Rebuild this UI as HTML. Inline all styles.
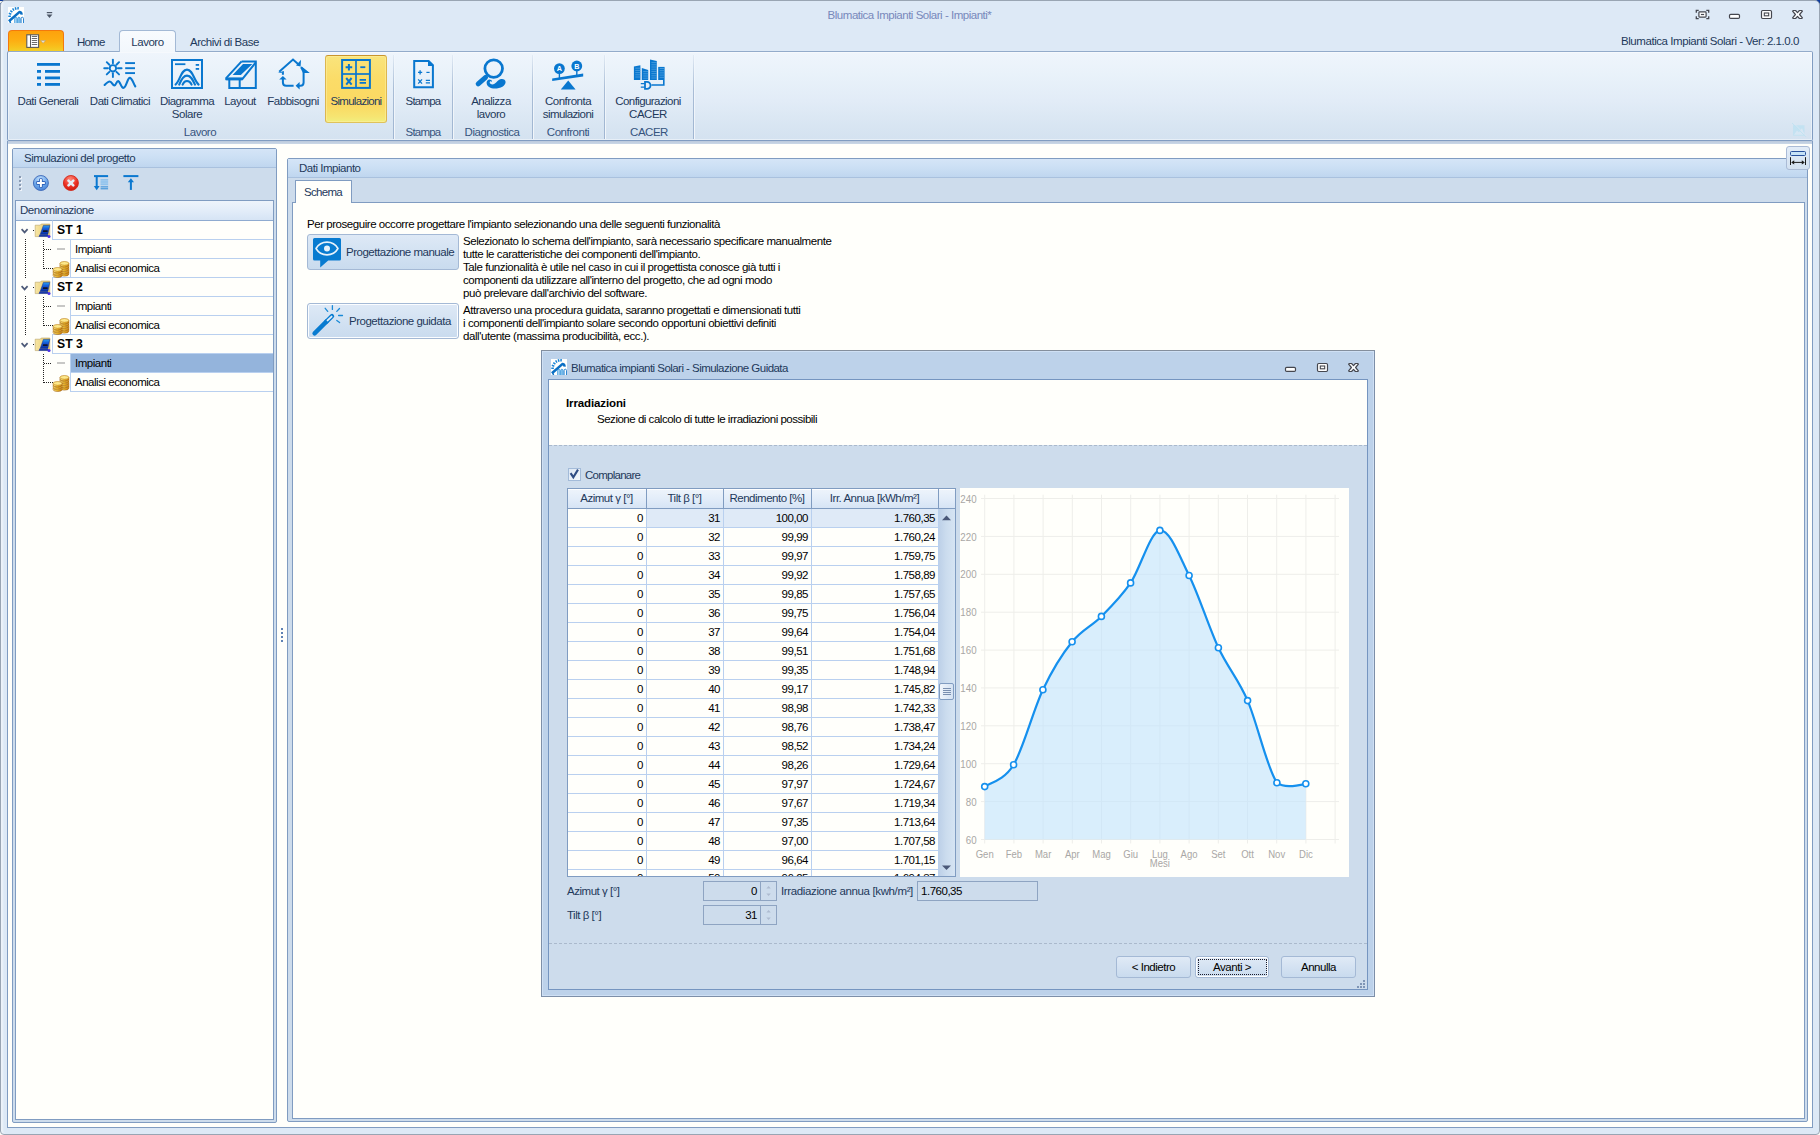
<!DOCTYPE html>
<html><head><meta charset="utf-8"><title>Blumatica Impianti Solari</title>
<style>
*{box-sizing:border-box;margin:0;padding:0}
html,body{width:1820px;height:1135px;overflow:hidden;background:#dde9f6}
body{font-family:"Liberation Sans",sans-serif;font-size:11.5px;letter-spacing:-0.48px;color:#1e395b;position:relative}
.a{position:absolute}
.t{position:absolute;white-space:nowrap;line-height:13px}
.c{text-align:center}
.r{text-align:right}
svg{position:absolute;overflow:visible}
</style></head>
<body>
<div class="a" style="left:0px;top:0px;width:6px;height:6px;background:#0d3b9b"></div>
<div class="a" style="left:1814px;top:0px;width:6px;height:6px;background:#0d3b9b"></div>
<div class="a" style="left:0px;top:1130px;width:5px;height:5px;background:#fdfdf8"></div>
<div class="a" style="left:1815px;top:1130px;width:5px;height:5px;background:#fdfdf8"></div>
<div class="a" style="left:0px;top:1px;width:3px;height:2px;background:#f3f3ee"></div>
<div class="a" style="left:0px;top:0px;width:1820px;height:1135px;background:#dde9f6;border:1px solid #99a5b3;border-radius:5px 5px 4px 4px;box-shadow:inset 3px 0 2px -1px rgba(255,255,255,0.5)"></div>
<div class="t c" style="left:0px;top:9px;width:1819px;color:#7888bb">Blumatica Impianti Solari - Impianti*</div>
<div class="t r" style="left:1500px;top:35px;width:299px;letter-spacing:-0.44px">Blumatica Impianti Solari - Ver: 2.1.0.0</div>
<svg style="left:0;top:0" width="1820" height="1135"><clipPath id="ci8"><rect x="8" y="7" width="16" height="16"/></clipPath><rect x="8" y="7" width="16" height="16" fill="#fffffd"/><g clip-path="url(#ci8)"><line x1="10.9" y1="16.3" x2="8.3" y2="16.2" stroke="#1a84d6" stroke-width="1.5"/><line x1="11.3" y1="14.2" x2="8.8" y2="13.3" stroke="#1a84d6" stroke-width="1.5"/><line x1="12.4" y1="12.2" x2="10.3" y2="10.6" stroke="#1a84d6" stroke-width="1.5"/><line x1="14.0" y1="10.6" x2="12.6" y2="8.4" stroke="#1a84d6" stroke-width="1.5"/><line x1="16.0" y1="9.7" x2="15.3" y2="7.2" stroke="#1a84d6" stroke-width="1.5"/><line x1="18.0" y1="9.5" x2="18.1" y2="6.9" stroke="#1a84d6" stroke-width="1.5"/><path d="M14.7,24 V18.7 a1.15,1.5 0 0 1 2.3,0 V24" fill="#b4daf4" stroke="#2f92dc" stroke-width="0.8"/><path d="M17.7,24 V18.7 a1.2,1.5 0 0 1 2.4,0 V24" fill="#8cc6ee" stroke="#2f92dc" stroke-width="0.8"/><path d="M21.1,24 V18.7 a1.2,1.5 0 0 1 2.4,0 V24" fill="none" stroke="#1577cc" stroke-width="0.9"/><path d="M8.9,21.3 L19.6,11.9 Q21.6,12.4 21.5,14.6" fill="none" stroke="#0a6fc4" stroke-width="2.5" stroke-linejoin="round"/><path d="M9.8,21.2 L10.6,23" stroke="#0a6fc4" stroke-width="1.4"/></g></svg>
<svg style="left:0;top:0" width="1820" height="1135"><rect x="46.8" y="12" width="5.4" height="1.2" fill="#4c5666"/><path d="M46.6,14.6 h5.8 l-2.9,3.3 z" fill="#4c5666"/></svg>
<svg style="left:0;top:0" width="1820" height="1135"><rect x="1698.9" y="11.9" width="7.2" height="5.2" rx="0.8" fill="#fff" stroke="#45474f" stroke-width="1.2"/><rect x="1700.9" y="13.9" width="3.2" height="1.2" fill="#45474f"/><path d="M1696.3,12.700000000000001 V10.3 H1698.7" fill="none" stroke="#45474f" stroke-width="1.3"/><path d="M1708.7,12.700000000000001 V10.3 H1706.3" fill="none" stroke="#45474f" stroke-width="1.3"/><path d="M1696.3,16.3 V18.7 H1698.7" fill="none" stroke="#45474f" stroke-width="1.3"/><path d="M1708.7,16.3 V18.7 H1706.3" fill="none" stroke="#45474f" stroke-width="1.3"/><rect x="1729.5" y="14.4" width="10" height="4" rx="1.2" fill="#fff" stroke="#45474f" stroke-width="1.2"/><rect x="1761.5" y="10.5" width="10" height="8" rx="1.2" fill="#fff" stroke="#45474f" stroke-width="1.2"/><rect x="1764.3" y="13.0" width="4.4" height="2.8" fill="#fff" stroke="#45474f" stroke-width="1.1"/><path d="M1792.6,11.1 L1793.3,10.5 L1795.6,10.5 L1797.5,12.6 L1799.4,10.5 L1801.7,10.5 L1802.4,11.1 L1799.6,14.5 L1802.4,17.9 L1801.7,18.5 L1799.4,18.5 L1797.5,16.4 L1795.6,18.5 L1793.3,18.5 L1792.6,17.9 L1795.4,14.5 z" fill="#fbfdff" stroke="#45474f" stroke-width="1.2" stroke-linejoin="round"/></svg>
<div class="a" style="left:8px;top:30px;width:56px;height:22px;border:1px solid #f3790d;border-bottom:none;border-radius:4px 4px 0 0;background:linear-gradient(#fda20c 0%,#fdae12 45%,#f8c01c 75%,#f0d22c 100%)"></div>
<svg style="left:0;top:0" width="1820" height="1135"><rect x="26.8" y="34.8" width="11.8" height="12.6" fill="#fff" stroke="#5a5a5a" stroke-width="1.1"/><line x1="30.5" y1="34.8" x2="30.5" y2="47.4" stroke="#5a5a5a" stroke-width="1"/><line x1="31.8" y1="36.5" x2="37.2" y2="36.5" stroke="#5a5a5a" stroke-width="0.9"/><line x1="31.8" y1="38.5" x2="37.2" y2="38.5" stroke="#5a5a5a" stroke-width="0.9"/><line x1="31.8" y1="40.5" x2="37.2" y2="40.5" stroke="#5a5a5a" stroke-width="0.9"/><line x1="31.8" y1="42.5" x2="37.2" y2="42.5" stroke="#5a5a5a" stroke-width="0.9"/><line x1="31.8" y1="44.5" x2="37.2" y2="44.5" stroke="#5a5a5a" stroke-width="0.9"/><path d="M40.6,40.6 h5 l-2.5,2.6 z" fill="#e9e3d2" stroke="#a89a78" stroke-width="0.5"/></svg>
<div class="t " style="left:77px;top:36px;letter-spacing:-0.8px">Home</div>
<div class="t " style="left:190px;top:36px;">Archivi di Base</div>
<div class="a" style="left:7px;top:51px;width:1806px;height:90px;border:1px solid #809cc1;border-radius:2px;background:linear-gradient(#eff5fc 0%,#e9f2fa 25%,#e2ecf7 55%,#d8e5f2 85%,#d4e2f0 100%);border-top-color:#93abca;box-shadow:inset 0 0 0 1px rgba(255,255,255,0.45)"></div>
<div class="a" style="left:119px;top:30px;width:57px;height:22px;border:1px solid #a3b9d5;border-bottom:none;border-radius:4px 4px 0 0;background:linear-gradient(#f8fbfe,#f2f7fc)"></div>
<div class="t c" style="left:119px;top:36px;width:57px;">Lavoro</div>
<div class="a" style="left:8px;top:141px;width:1804px;height:3px;background:linear-gradient(#bac9dc,#cbd8e7)"></div>
<div class="a" style="left:393px;top:55px;width:1px;height:84px;background:linear-gradient(rgba(160,180,205,0.15),#a9bdd6 40%,#9fb5d1)"></div>
<div class="a" style="left:394px;top:55px;width:1px;height:84px;background:linear-gradient(rgba(255,255,255,0.2),rgba(255,255,255,0.7))"></div>
<div class="a" style="left:452px;top:55px;width:1px;height:84px;background:linear-gradient(rgba(160,180,205,0.15),#a9bdd6 40%,#9fb5d1)"></div>
<div class="a" style="left:453px;top:55px;width:1px;height:84px;background:linear-gradient(rgba(255,255,255,0.2),rgba(255,255,255,0.7))"></div>
<div class="a" style="left:532px;top:55px;width:1px;height:84px;background:linear-gradient(rgba(160,180,205,0.15),#a9bdd6 40%,#9fb5d1)"></div>
<div class="a" style="left:533px;top:55px;width:1px;height:84px;background:linear-gradient(rgba(255,255,255,0.2),rgba(255,255,255,0.7))"></div>
<div class="a" style="left:604px;top:55px;width:1px;height:84px;background:linear-gradient(rgba(160,180,205,0.15),#a9bdd6 40%,#9fb5d1)"></div>
<div class="a" style="left:605px;top:55px;width:1px;height:84px;background:linear-gradient(rgba(255,255,255,0.2),rgba(255,255,255,0.7))"></div>
<div class="a" style="left:693px;top:55px;width:1px;height:84px;background:linear-gradient(rgba(160,180,205,0.15),#a9bdd6 40%,#9fb5d1)"></div>
<div class="a" style="left:694px;top:55px;width:1px;height:84px;background:linear-gradient(rgba(255,255,255,0.2),rgba(255,255,255,0.7))"></div>
<div class="t c" style="left:150px;top:126px;width:100px;color:#36547e">Lavoro</div>
<div class="t c" style="left:373px;top:126px;width:100px;color:#36547e;letter-spacing:-0.8px">Stampa</div>
<div class="t c" style="left:442px;top:126px;width:100px;color:#36547e">Diagnostica</div>
<div class="t c" style="left:518px;top:126px;width:100px;color:#36547e">Confronti</div>
<div class="t c" style="left:599px;top:126px;width:100px;color:#36547e">CACER</div>
<div class="a" style="left:325px;top:55px;width:62px;height:68px;border:1px solid #dcb650;border-top-color:#c8942e;border-bottom-color:#dfc25c;border-radius:3px;background:linear-gradient(#f9e47c 0%,#fbdc68 35%,#fbd962 75%,#f6e572 92%,#f1ee7e 100%);box-shadow:inset 0 0 0 1px rgba(255,240,160,0.55)"></div>
<div class="t c" style="left:-2px;top:95px;width:100px;">Dati Generali</div>
<div class="t c" style="left:70px;top:95px;width:100px;">Dati Climatici</div>
<div class="t c" style="left:137px;top:95px;width:100px;letter-spacing:-0.6px">Diagramma</div>
<div class="t c" style="left:137px;top:108px;width:100px;">Solare</div>
<div class="t c" style="left:190px;top:95px;width:100px;">Layout</div>
<div class="t c" style="left:243px;top:95px;width:100px;">Fabbisogni</div>
<div class="t c" style="left:306px;top:95px;width:100px;letter-spacing:-0.72px">Simulazioni</div>
<div class="t c" style="left:373px;top:95px;width:100px;letter-spacing:-0.8px">Stampa</div>
<div class="t c" style="left:441px;top:95px;width:100px;">Analizza</div>
<div class="t c" style="left:441px;top:108px;width:100px;">lavoro</div>
<div class="t c" style="left:518px;top:95px;width:100px;">Confronta</div>
<div class="t c" style="left:518px;top:108px;width:100px;letter-spacing:-0.6px">simulazioni</div>
<div class="t c" style="left:598px;top:95px;width:100px;letter-spacing:-0.58px">Configurazioni</div>
<div class="t c" style="left:598px;top:108px;width:100px;">CACER</div>
<svg style="left:0;top:0" width="1820" height="1135"><rect x="37" y="63" width="23" height="2.8" fill="#0977cf"/><rect x="37" y="70" width="4" height="2.8" fill="#0977cf"/><rect x="45" y="70" width="15" height="2.8" fill="#0977cf"/><rect x="37" y="76.5" width="4" height="2.8" fill="#0977cf"/><rect x="45" y="76.5" width="15" height="2.8" fill="#0977cf"/><rect x="37" y="83" width="4" height="2.8" fill="#0977cf"/><rect x="45" y="83" width="15" height="2.8" fill="#0977cf"/><circle cx="112.9" cy="68.3" r="3.2" fill="none" stroke="#0977cf" stroke-width="1.9"/><line x1="117.90" y1="68.30" x2="121.60" y2="68.30" stroke="#0977cf" stroke-width="1.9" stroke-linecap="round"/><line x1="116.44" y1="71.84" x2="119.05" y2="74.45" stroke="#0977cf" stroke-width="1.9" stroke-linecap="round"/><line x1="112.90" y1="73.30" x2="112.90" y2="77.00" stroke="#0977cf" stroke-width="1.9" stroke-linecap="round"/><line x1="109.36" y1="71.84" x2="106.75" y2="74.45" stroke="#0977cf" stroke-width="1.9" stroke-linecap="round"/><line x1="107.90" y1="68.30" x2="104.20" y2="68.30" stroke="#0977cf" stroke-width="1.9" stroke-linecap="round"/><line x1="109.36" y1="64.76" x2="106.75" y2="62.15" stroke="#0977cf" stroke-width="1.9" stroke-linecap="round"/><line x1="112.90" y1="63.30" x2="112.90" y2="59.60" stroke="#0977cf" stroke-width="1.9" stroke-linecap="round"/><line x1="116.44" y1="64.76" x2="119.05" y2="62.15" stroke="#0977cf" stroke-width="1.9" stroke-linecap="round"/><line x1="125.2" y1="63.1" x2="135" y2="63.1" stroke="#0977cf" stroke-width="1.9"/><line x1="125.2" y1="68.2" x2="135" y2="68.2" stroke="#0977cf" stroke-width="1.9"/><line x1="125.2" y1="73.1" x2="135" y2="73.1" stroke="#0977cf" stroke-width="1.9"/><path d="M104.6,85 C106.5,83 108,81.5 109.8,81.5 C112,81.5 112.5,85.4 114.4,85.4 C116.3,85.4 116.3,81.1 118.1,81.1 C120.2,81.1 121,87.9 123.4,87.9 C126.2,87.9 127.4,77.9 129.8,77.9 C132,77.9 133.5,83.5 135.3,86.4" fill="none" stroke="#0977cf" stroke-width="2.1" stroke-linecap="round"/><rect x="172" y="60" width="30" height="28" fill="none" stroke="#0977cf" stroke-width="2"/><line x1="175" y1="64.2" x2="185.4" y2="64.2" stroke="#0977cf" stroke-width="1.8"/><rect x="195.7" y="64" width="3.4" height="1.8" fill="#0977cf"/><rect x="195.7" y="68" width="3.4" height="1.8" fill="#0977cf"/><path d="M175.6,84.6 C180.5,80 181,69.6 187,69.6 C193,69.6 193.5,80 198.6,84.6" fill="none" stroke="#0977cf" stroke-width="2.1" stroke-linecap="round"/><path d="M179.2,84.6 C181,80 183,75.6 187,75.6 C191,75.6 193,80 195,84.6" fill="none" stroke="#0977cf" stroke-width="2.1" stroke-linecap="round"/><path d="M182.6,84.6 C183.5,82.4 185,81 187,81 C189,81 190.6,82.4 191.6,84.6" fill="none" stroke="#0977cf" stroke-width="2.1" stroke-linecap="round"/><path d="M241.6,61.4 H255.8 V87.9 H229.3 V79.3" fill="none" stroke="#0977cf" stroke-width="2" stroke-linejoin="miter"/><path d="M241.6,61.4 L226.6,77.6 V79.2 H242.3 L255.8,62.4" fill="none" stroke="#0977cf" stroke-width="2" stroke-linejoin="round"/><path d="M225.4,77.4 H242.6 V80.2 H225.4 z" fill="#0977cf"/><path d="M243,64 H252.4 L240.8,75 H232.6 z" fill="#0977cf"/><line x1="239.7" y1="79.5" x2="239.7" y2="88" stroke="#0977cf" stroke-width="2"/><path d="M282.9,74.7 V72.2 M279.2,71.8 L293,59.6 L298.6,64.6" fill="none" stroke="#0977cf" stroke-width="2" stroke-linejoin="miter" stroke-linecap="butt"/><path d="M277.6,72.8 H283.9 V71 z" fill="#0977cf"/><path d="M296,65.6 L301,59.8 L300.6,66.4 z" fill="#0977cf"/><path d="M301.4,67.4 L307,72 H303.6 V82.6 Q303.6,85.8 300.4,85.8 H299" fill="none" stroke="#0977cf" stroke-width="2"/><path d="M308.8,72.9 L301,66.2 L300.4,68 L303,72.9 z" fill="#0977cf"/><path d="M299.6,82 L295.6,85.8 L299.6,89.6 z" fill="#0977cf"/><path d="M293.6,85.8 H286.2 Q282.9,85.8 282.9,82.6 V79" fill="none" stroke="#0977cf" stroke-width="2"/><path d="M279.2,79.6 L282.9,76 L286.6,79.6 z" fill="#0977cf"/><rect x="342.1" y="60" width="27.8" height="27.9" fill="none" stroke="#0977cf" stroke-width="2"/><line x1="356" y1="60" x2="356" y2="88" stroke="#0977cf" stroke-width="1.7"/><line x1="342" y1="74" x2="370" y2="74" stroke="#0977cf" stroke-width="1.7"/><path d="M345.6,67.2 h6.6 M348.9,63.9 v6.6" stroke="#0977cf" stroke-width="2"/><path d="M360.3,67.2 h5" stroke="#0977cf" stroke-width="1.8"/><path d="M346.2,78 l5.4,6.6 M351.6,78 l-5.4,6.6" stroke="#0977cf" stroke-width="2"/><path d="M359.6,79.8 h6.4 M359.6,82.8 h6.4" stroke="#0977cf" stroke-width="1.7"/><path d="M414.2,61 H428.6 L432.9,65.2 V87.3 H414.2 z" fill="none" stroke="#0977cf" stroke-width="2" stroke-linejoin="miter"/><path d="M428,60.4 V66 H433.6 z" fill="#0977cf"/><path d="M418,72.4 h4.2 M420.1,70.3 v4.2" stroke="#0977cf" stroke-width="1.3"/><path d="M426.4,72.4 h3.2" stroke="#0977cf" stroke-width="1.2"/><path d="M418.2,79.4 l3.8,4.2 M422,79.4 l-3.8,4.2" stroke="#0977cf" stroke-width="1.3"/><path d="M425.8,80.4 h4.2 M425.8,82.8 h4.2" stroke="#0977cf" stroke-width="1.2"/><circle cx="493.7" cy="68.6" r="8.8" fill="none" stroke="#0977cf" stroke-width="2.8"/><path d="M485.6,77.4 L478.2,83.8" stroke="#0977cf" stroke-width="5" stroke-linecap="round"/><path d="M491.2,80.2 C489,78.6 486.6,80.4 486.6,82.8 C486.6,86.4 490.6,88.6 494.8,88.6 C500.8,88.6 505.6,85.6 505.6,82 C505.6,79.4 502.8,78.4 500.2,79.2 C497.2,80.2 495.8,84.4 492.2,84.4 C490,84.4 489.2,82.6 490,81.6 C490.5,81 491.3,81.2 491.4,81.8 C492.4,81.4 492.2,80.6 491.2,80.2 z" fill="#0977cf"/><circle cx="559.4" cy="68.6" r="5.4" fill="#0977cf"/><circle cx="576.8" cy="66" r="5.4" fill="#0977cf"/><line x1="559.4" y1="73" x2="559.4" y2="78" stroke="#0977cf" stroke-width="1.4"/><line x1="576.8" y1="70" x2="576.8" y2="75.4" stroke="#0977cf" stroke-width="1.4"/><path d="M552.2,78.4 L583.2,73.4 V76.4 L552.2,81.1 z" fill="#0977cf"/><path d="M568.2,80.4 L575.6,89.6 H560.8 z" fill="#0977cf"/><text x="559.4" y="71.4" text-anchor="middle" font-family="Liberation Sans" font-weight="bold" font-size="7.2" fill="#fff" letter-spacing="0">A</text><text x="576.8" y="68.8" text-anchor="middle" font-family="Liberation Sans" font-weight="bold" font-size="7.2" fill="#fff" letter-spacing="0">B</text><path d="M633.9,66.6 L640.4,65.2 V80 H633.9 z" fill="#0977cf"/><line x1="635.3" y1="68.2" x2="640.4" y2="68.2" stroke="#5aa7e2" stroke-width="0.7"/><line x1="635.3" y1="70.4" x2="640.4" y2="70.4" stroke="#5aa7e2" stroke-width="0.7"/><line x1="635.3" y1="72.6" x2="640.4" y2="72.6" stroke="#5aa7e2" stroke-width="0.7"/><line x1="635.3" y1="74.8" x2="640.4" y2="74.8" stroke="#5aa7e2" stroke-width="0.7"/><line x1="635.3" y1="77.0" x2="640.4" y2="77.0" stroke="#5aa7e2" stroke-width="0.7"/><path d="M641.8,68 L648.2,70 V80 H641.8 z" fill="#0977cf"/><line x1="643.1999999999999" y1="71.6" x2="648.2" y2="71.6" stroke="#5aa7e2" stroke-width="0.7"/><line x1="643.1999999999999" y1="73.8" x2="648.2" y2="73.8" stroke="#5aa7e2" stroke-width="0.7"/><line x1="643.1999999999999" y1="76.0" x2="648.2" y2="76.0" stroke="#5aa7e2" stroke-width="0.7"/><line x1="643.1999999999999" y1="78.2" x2="648.2" y2="78.2" stroke="#5aa7e2" stroke-width="0.7"/><path d="M650,59.4 L656.8,61 V80 H650 z" fill="#0977cf"/><line x1="651.4" y1="62.6" x2="656.8" y2="62.6" stroke="#5aa7e2" stroke-width="0.7"/><line x1="651.4" y1="64.8" x2="656.8" y2="64.8" stroke="#5aa7e2" stroke-width="0.7"/><line x1="651.4" y1="67.0" x2="656.8" y2="67.0" stroke="#5aa7e2" stroke-width="0.7"/><line x1="651.4" y1="69.2" x2="656.8" y2="69.2" stroke="#5aa7e2" stroke-width="0.7"/><line x1="651.4" y1="71.4" x2="656.8" y2="71.4" stroke="#5aa7e2" stroke-width="0.7"/><line x1="651.4" y1="73.6" x2="656.8" y2="73.6" stroke="#5aa7e2" stroke-width="0.7"/><line x1="651.4" y1="75.8" x2="656.8" y2="75.8" stroke="#5aa7e2" stroke-width="0.7"/><line x1="651.4" y1="78.0" x2="656.8" y2="78.0" stroke="#5aa7e2" stroke-width="0.7"/><path d="M658.2,66.9 L664.6,66.9 V80 H658.2 z" fill="#0977cf"/><line x1="659.6" y1="68.5" x2="664.6" y2="68.5" stroke="#5aa7e2" stroke-width="0.7"/><line x1="659.6" y1="70.7" x2="664.6" y2="70.7" stroke="#5aa7e2" stroke-width="0.7"/><line x1="659.6" y1="72.9" x2="664.6" y2="72.9" stroke="#5aa7e2" stroke-width="0.7"/><line x1="659.6" y1="75.1" x2="664.6" y2="75.1" stroke="#5aa7e2" stroke-width="0.7"/><line x1="659.6" y1="77.3" x2="664.6" y2="77.3" stroke="#5aa7e2" stroke-width="0.7"/><path d="M663.8,80 V85 H651.4" fill="none" stroke="#0977cf" stroke-width="1.6"/><path d="M645,81.9 h2 a3.5,3.5 0 0 1 0,7 h-2 z" fill="none" stroke="#0977cf" stroke-width="1.8"/><path d="M640.8,83.6 h4 M640.8,87.1 h4" stroke="#0977cf" stroke-width="1.3"/></svg>
<svg style="left:0;top:0" width="1820" height="1135"><rect x="1793" y="125.2" width="11.5" height="10.5" fill="#bfe2f2" opacity="0.85"/><path d="M1794,134.8 l3,-4.4 l2,2.2 l3,-4.6 l2.4,6.8 z" fill="#d9e8f4" opacity="0.9"/><path d="M1792.1,123 L1805.9,136.8" stroke="#bfe2f2" stroke-width="1" opacity="0.9"/><path d="M1792.9,122.4 L1806.7,136.2" stroke="#dbe7f3" stroke-width="0.8"/></svg>
<div class="a" style="left:7px;top:141px;width:1806px;height:987px;border:1px solid #809cc1;border-top:none;background:transparent"></div>
<div class="a" style="left:8px;top:144px;width:1804px;height:983px;background:#fffffb"></div>
<div class="a" style="left:12px;top:148px;width:265px;height:975px;border:1px solid #809cc1;border-radius:2px;background:#cddcec"></div>
<div class="a" style="left:13px;top:149px;width:263px;height:19px;background:linear-gradient(#d5e5f7 0%,#cbdff4 50%,#bfd6ef 100%);border-bottom:1px solid #a9c1de"></div>
<div class="t " style="left:24px;top:152px;">Simulazioni del progetto</div>
<div class="a" style="left:19px;top:176px;width:2px;height:2px;background:#8a9bb3;box-shadow:1px 1px 0 #eef3fa"></div>
<div class="a" style="left:19px;top:180px;width:2px;height:2px;background:#8a9bb3;box-shadow:1px 1px 0 #eef3fa"></div>
<div class="a" style="left:19px;top:184px;width:2px;height:2px;background:#8a9bb3;box-shadow:1px 1px 0 #eef3fa"></div>
<div class="a" style="left:19px;top:188px;width:2px;height:2px;background:#8a9bb3;box-shadow:1px 1px 0 #eef3fa"></div>
<svg style="left:0;top:0" width="1820" height="1135"><defs><radialGradient id="gA" cx="0.45" cy="0.25" r="0.85"><stop offset="0" stop-color="#c4e0fb"/><stop offset="0.55" stop-color="#6aa6ea"/><stop offset="1" stop-color="#3a72cc"/></radialGradient><radialGradient id="gD" cx="0.45" cy="0.25" r="0.85"><stop offset="0" stop-color="#ff8a7a"/><stop offset="0.55" stop-color="#ec2f22"/><stop offset="1" stop-color="#c01408"/></radialGradient></defs><circle cx="40.9" cy="183" r="7.5" fill="url(#gA)" stroke="#3d69b8" stroke-width="0.9"/><path d="M37.7,183 h6.4 M40.9,179.8 v6.4" stroke="#2f62ba" stroke-width="3.8" stroke-linecap="round"/><path d="M37.7,183 h6.4 M40.9,179.8 v6.4" stroke="#fff" stroke-width="2" stroke-linecap="round"/><circle cx="70.9" cy="183" r="7.5" fill="url(#gD)" stroke="#d2281a" stroke-width="0.9"/><path d="M68.5,180.6 l4.8,4.8 M73.3,180.6 l-4.8,4.8" stroke="#e6edf4" stroke-width="2.6" stroke-linecap="round"/><rect x="94" y="175.1" width="14.1" height="2" fill="#0b78d0"/><rect x="95.7" y="177" width="2" height="10" fill="#0b78d0"/><path d="M93.8,186 h5.8 l-2.9,4.2 z" fill="#0b78d0"/><rect x="100.6" y="179" width="7.5" height="6.4" fill="#a9cff0"/><line x1="100.6" y1="179.6" x2="108.1" y2="179.6" stroke="#7fb8ea" stroke-width="0.6"/><line x1="100.6" y1="181.2" x2="108.1" y2="181.2" stroke="#7fb8ea" stroke-width="0.6"/><line x1="100.6" y1="182.8" x2="108.1" y2="182.8" stroke="#7fb8ea" stroke-width="0.6"/><line x1="100.6" y1="184.4" x2="108.1" y2="184.4" stroke="#7fb8ea" stroke-width="0.6"/><line x1="100.6" y1="186.9" x2="108.1" y2="186.9" stroke="#2a88d8" stroke-width="1"/><line x1="100.6" y1="188.8" x2="108.1" y2="188.8" stroke="#2a88d8" stroke-width="1"/><rect x="123.4" y="175.1" width="15" height="2" fill="#0b78d0"/><rect x="129.9" y="181.6" width="2" height="8.3" fill="#0b78d0"/><path d="M127.8,182.2 h6.2 l-3.1,-4 z" fill="#0b78d0"/></svg>
<div class="a" style="left:15px;top:200px;width:259px;height:920px;border:1px solid #809cc1;background:#fffffb"></div>
<div class="a" style="left:16px;top:201px;width:257px;height:19px;background:linear-gradient(#eef4fb 0%,#e3edf9 50%,#d6e4f5 100%)"></div>
<div class="a" style="left:16px;top:220px;width:257px;height:1px;background:#8fabd0"></div>
<div class="t " style="left:20px;top:204px;">Denominazione</div>
<div class="a" style="left:52px;top:220px;width:221px;height:20px;border:1px solid #b9d0ef;border-right:none;border-top-color:#8fabd0;background:#fffffb"></div>
<div class="t " style="left:57px;top:223.6px;font-weight:bold;font-size:12.2px;letter-spacing:0.05px;color:#000">ST 1</div>
<div class="a" style="left:70px;top:239px;width:203px;height:20px;border:1px solid #b9d0ef;border-right:none;background:#fffffb"></div>
<div class="t " style="left:75px;top:243px;color:#000">Impianti</div>
<div class="a" style="left:70px;top:258px;width:203px;height:20px;border:1px solid #b9d0ef;border-right:none;background:#fffffb"></div>
<div class="t " style="left:75px;top:262px;color:#000">Analisi economica</div>
<div class="a" style="left:52px;top:277px;width:221px;height:20px;border:1px solid #b9d0ef;border-right:none;border-top-color:#b9d0ef;background:#fffffb"></div>
<div class="t " style="left:57px;top:280.6px;font-weight:bold;font-size:12.2px;letter-spacing:0.05px;color:#000">ST 2</div>
<div class="a" style="left:70px;top:296px;width:203px;height:20px;border:1px solid #b9d0ef;border-right:none;background:#fffffb"></div>
<div class="t " style="left:75px;top:300px;color:#000">Impianti</div>
<div class="a" style="left:70px;top:315px;width:203px;height:20px;border:1px solid #b9d0ef;border-right:none;background:#fffffb"></div>
<div class="t " style="left:75px;top:319px;color:#000">Analisi economica</div>
<div class="a" style="left:52px;top:334px;width:221px;height:20px;border:1px solid #b9d0ef;border-right:none;border-top-color:#b9d0ef;background:#fffffb"></div>
<div class="t " style="left:57px;top:337.6px;font-weight:bold;font-size:12.2px;letter-spacing:0.05px;color:#000">ST 3</div>
<div class="a" style="left:70px;top:353px;width:203px;height:20px;border:1px solid #b9d0ef;border-right:none;background:#94b4dc"></div>
<div class="t " style="left:75px;top:357px;color:#000">Impianti</div>
<div class="a" style="left:70px;top:372px;width:203px;height:20px;border:1px solid #b9d0ef;border-right:none;background:#fffffb"></div>
<div class="t " style="left:75px;top:376px;color:#000">Analisi economica</div>
<svg style="left:0;top:0" width="1820" height="1135"><defs><linearGradient id="gF" x1="0" y1="0" x2="1" y2="0"><stop offset="0" stop-color="#f7e6a4"/><stop offset="1" stop-color="#e6c667"/></linearGradient><linearGradient id="gP" x1="0" y1="0" x2="0" y2="1"><stop offset="0" stop-color="#2aa0f0"/><stop offset="0.4" stop-color="#1458d8"/><stop offset="1" stop-color="#0a2fa0"/></linearGradient><linearGradient id="gC" x1="0" y1="0" x2="1" y2="0"><stop offset="0" stop-color="#fff0a0"/><stop offset="0.5" stop-color="#f3c22e"/><stop offset="1" stop-color="#c9780e"/></linearGradient></defs><path d="M21.6,229.2 l3,3.2 l3,-3.2" fill="none" stroke="#4d5a78" stroke-width="1.7"/><rect x="33" y="230" width="1" height="1" fill="#222"/><path d="M35.2,225.20000000000002 h5 l1,-1.2 h8.6 v12.6 h-14.6 z" fill="url(#gF)" stroke="#b9a268" stroke-width="0.6"/><path d="M43.400000000000006,225.4 h6.4 l-2,9 h-7.6 z" fill="url(#gP)" stroke="#0a2a8a" stroke-width="0.5"/><path d="M43.2,230.20000000000002 h4.4 v1.8 h-4.8 z" fill="#10142e"/><path d="M39.6,234.60000000000002 h8 l1.6,2.2 h-10.6 z" fill="#1a3aa8"/><circle cx="49.0" cy="236.4" r="1.5" fill="#4a2fe8"/><rect x="57" y="248" width="8" height="2" fill="#c8c8c6"/><path d="M60.00000000000001,272.59999999999997 v1.6 a4.4,1.9 0 0 0 8.8,0 v-1.6 z" fill="url(#gC)" stroke="#9c5a06" stroke-width="0.6"/><ellipse cx="64.4" cy="272.59999999999997" rx="4.4" ry="1.9" fill="#fde88a" stroke="#b9780e" stroke-width="0.6"/><path d="M60.00000000000001,270.29999999999995 v1.6 a4.4,1.9 0 0 0 8.8,0 v-1.6 z" fill="url(#gC)" stroke="#9c5a06" stroke-width="0.6"/><ellipse cx="64.4" cy="270.29999999999995" rx="4.4" ry="1.9" fill="#fde88a" stroke="#b9780e" stroke-width="0.6"/><path d="M60.00000000000001,267.99999999999994 v1.6 a4.4,1.9 0 0 0 8.8,0 v-1.6 z" fill="url(#gC)" stroke="#9c5a06" stroke-width="0.6"/><ellipse cx="64.4" cy="267.99999999999994" rx="4.4" ry="1.9" fill="#fde88a" stroke="#b9780e" stroke-width="0.6"/><path d="M60.00000000000001,265.7 v1.6 a4.4,1.9 0 0 0 8.8,0 v-1.6 z" fill="url(#gC)" stroke="#9c5a06" stroke-width="0.6"/><ellipse cx="64.4" cy="265.7" rx="4.4" ry="1.9" fill="#fde88a" stroke="#b9780e" stroke-width="0.6"/><path d="M60.00000000000001,263.4 v1.6 a4.4,1.9 0 0 0 8.8,0 v-1.6 z" fill="url(#gC)" stroke="#9c5a06" stroke-width="0.6"/><ellipse cx="64.4" cy="263.4" rx="4.4" ry="1.9" fill="#fde88a" stroke="#b9780e" stroke-width="0.6"/><path d="M53.2,274.0 v1.6 a4.4,1.9 0 0 0 8.8,0 v-1.6 z" fill="url(#gC)" stroke="#9c5a06" stroke-width="0.6"/><ellipse cx="57.6" cy="274.0" rx="4.4" ry="1.9" fill="#fde88a" stroke="#b9780e" stroke-width="0.6"/><path d="M53.2,271.7 v1.6 a4.4,1.9 0 0 0 8.8,0 v-1.6 z" fill="url(#gC)" stroke="#9c5a06" stroke-width="0.6"/><ellipse cx="57.6" cy="271.7" rx="4.4" ry="1.9" fill="#fde88a" stroke="#b9780e" stroke-width="0.6"/><path d="M53.2,269.4 v1.6 a4.4,1.9 0 0 0 8.8,0 v-1.6 z" fill="url(#gC)" stroke="#9c5a06" stroke-width="0.6"/><ellipse cx="57.6" cy="269.4" rx="4.4" ry="1.9" fill="#fde88a" stroke="#b9780e" stroke-width="0.6"/><path d="M21.6,286.2 l3,3.2 l3,-3.2" fill="none" stroke="#4d5a78" stroke-width="1.7"/><rect x="33" y="287" width="1" height="1" fill="#222"/><path d="M35.2,282.2 h5 l1,-1.2 h8.6 v12.6 h-14.6 z" fill="url(#gF)" stroke="#b9a268" stroke-width="0.6"/><path d="M43.400000000000006,282.40000000000003 h6.4 l-2,9 h-7.6 z" fill="url(#gP)" stroke="#0a2a8a" stroke-width="0.5"/><path d="M43.2,287.2 h4.4 v1.8 h-4.8 z" fill="#10142e"/><path d="M39.6,291.6 h8 l1.6,2.2 h-10.6 z" fill="#1a3aa8"/><circle cx="49.0" cy="293.40000000000003" r="1.5" fill="#4a2fe8"/><rect x="57" y="305" width="8" height="2" fill="#c8c8c6"/><path d="M60.00000000000001,329.59999999999997 v1.6 a4.4,1.9 0 0 0 8.8,0 v-1.6 z" fill="url(#gC)" stroke="#9c5a06" stroke-width="0.6"/><ellipse cx="64.4" cy="329.59999999999997" rx="4.4" ry="1.9" fill="#fde88a" stroke="#b9780e" stroke-width="0.6"/><path d="M60.00000000000001,327.29999999999995 v1.6 a4.4,1.9 0 0 0 8.8,0 v-1.6 z" fill="url(#gC)" stroke="#9c5a06" stroke-width="0.6"/><ellipse cx="64.4" cy="327.29999999999995" rx="4.4" ry="1.9" fill="#fde88a" stroke="#b9780e" stroke-width="0.6"/><path d="M60.00000000000001,324.99999999999994 v1.6 a4.4,1.9 0 0 0 8.8,0 v-1.6 z" fill="url(#gC)" stroke="#9c5a06" stroke-width="0.6"/><ellipse cx="64.4" cy="324.99999999999994" rx="4.4" ry="1.9" fill="#fde88a" stroke="#b9780e" stroke-width="0.6"/><path d="M60.00000000000001,322.7 v1.6 a4.4,1.9 0 0 0 8.8,0 v-1.6 z" fill="url(#gC)" stroke="#9c5a06" stroke-width="0.6"/><ellipse cx="64.4" cy="322.7" rx="4.4" ry="1.9" fill="#fde88a" stroke="#b9780e" stroke-width="0.6"/><path d="M60.00000000000001,320.4 v1.6 a4.4,1.9 0 0 0 8.8,0 v-1.6 z" fill="url(#gC)" stroke="#9c5a06" stroke-width="0.6"/><ellipse cx="64.4" cy="320.4" rx="4.4" ry="1.9" fill="#fde88a" stroke="#b9780e" stroke-width="0.6"/><path d="M53.2,331.0 v1.6 a4.4,1.9 0 0 0 8.8,0 v-1.6 z" fill="url(#gC)" stroke="#9c5a06" stroke-width="0.6"/><ellipse cx="57.6" cy="331.0" rx="4.4" ry="1.9" fill="#fde88a" stroke="#b9780e" stroke-width="0.6"/><path d="M53.2,328.7 v1.6 a4.4,1.9 0 0 0 8.8,0 v-1.6 z" fill="url(#gC)" stroke="#9c5a06" stroke-width="0.6"/><ellipse cx="57.6" cy="328.7" rx="4.4" ry="1.9" fill="#fde88a" stroke="#b9780e" stroke-width="0.6"/><path d="M53.2,326.4 v1.6 a4.4,1.9 0 0 0 8.8,0 v-1.6 z" fill="url(#gC)" stroke="#9c5a06" stroke-width="0.6"/><ellipse cx="57.6" cy="326.4" rx="4.4" ry="1.9" fill="#fde88a" stroke="#b9780e" stroke-width="0.6"/><path d="M21.6,343.2 l3,3.2 l3,-3.2" fill="none" stroke="#4d5a78" stroke-width="1.7"/><rect x="33" y="344" width="1" height="1" fill="#222"/><path d="M35.2,339.2 h5 l1,-1.2 h8.6 v12.6 h-14.6 z" fill="url(#gF)" stroke="#b9a268" stroke-width="0.6"/><path d="M43.400000000000006,339.40000000000003 h6.4 l-2,9 h-7.6 z" fill="url(#gP)" stroke="#0a2a8a" stroke-width="0.5"/><path d="M43.2,344.2 h4.4 v1.8 h-4.8 z" fill="#10142e"/><path d="M39.6,348.6 h8 l1.6,2.2 h-10.6 z" fill="#1a3aa8"/><circle cx="49.0" cy="350.40000000000003" r="1.5" fill="#4a2fe8"/><rect x="57" y="362" width="8" height="2" fill="#c8c8c6"/><path d="M60.00000000000001,386.59999999999997 v1.6 a4.4,1.9 0 0 0 8.8,0 v-1.6 z" fill="url(#gC)" stroke="#9c5a06" stroke-width="0.6"/><ellipse cx="64.4" cy="386.59999999999997" rx="4.4" ry="1.9" fill="#fde88a" stroke="#b9780e" stroke-width="0.6"/><path d="M60.00000000000001,384.29999999999995 v1.6 a4.4,1.9 0 0 0 8.8,0 v-1.6 z" fill="url(#gC)" stroke="#9c5a06" stroke-width="0.6"/><ellipse cx="64.4" cy="384.29999999999995" rx="4.4" ry="1.9" fill="#fde88a" stroke="#b9780e" stroke-width="0.6"/><path d="M60.00000000000001,381.99999999999994 v1.6 a4.4,1.9 0 0 0 8.8,0 v-1.6 z" fill="url(#gC)" stroke="#9c5a06" stroke-width="0.6"/><ellipse cx="64.4" cy="381.99999999999994" rx="4.4" ry="1.9" fill="#fde88a" stroke="#b9780e" stroke-width="0.6"/><path d="M60.00000000000001,379.7 v1.6 a4.4,1.9 0 0 0 8.8,0 v-1.6 z" fill="url(#gC)" stroke="#9c5a06" stroke-width="0.6"/><ellipse cx="64.4" cy="379.7" rx="4.4" ry="1.9" fill="#fde88a" stroke="#b9780e" stroke-width="0.6"/><path d="M60.00000000000001,377.4 v1.6 a4.4,1.9 0 0 0 8.8,0 v-1.6 z" fill="url(#gC)" stroke="#9c5a06" stroke-width="0.6"/><ellipse cx="64.4" cy="377.4" rx="4.4" ry="1.9" fill="#fde88a" stroke="#b9780e" stroke-width="0.6"/><path d="M53.2,388.0 v1.6 a4.4,1.9 0 0 0 8.8,0 v-1.6 z" fill="url(#gC)" stroke="#9c5a06" stroke-width="0.6"/><ellipse cx="57.6" cy="388.0" rx="4.4" ry="1.9" fill="#fde88a" stroke="#b9780e" stroke-width="0.6"/><path d="M53.2,385.7 v1.6 a4.4,1.9 0 0 0 8.8,0 v-1.6 z" fill="url(#gC)" stroke="#9c5a06" stroke-width="0.6"/><ellipse cx="57.6" cy="385.7" rx="4.4" ry="1.9" fill="#fde88a" stroke="#b9780e" stroke-width="0.6"/><path d="M53.2,383.4 v1.6 a4.4,1.9 0 0 0 8.8,0 v-1.6 z" fill="url(#gC)" stroke="#9c5a06" stroke-width="0.6"/><ellipse cx="57.6" cy="383.4" rx="4.4" ry="1.9" fill="#fde88a" stroke="#b9780e" stroke-width="0.6"/></svg>
<svg style="left:0;top:0" width="1820" height="1135"><line x1="25.5" y1="239" x2="25.5" y2="279" stroke="#222" stroke-width="1" stroke-dasharray="1,1"/><line x1="43.5" y1="240" x2="43.5" y2="269" stroke="#222" stroke-width="1" stroke-dasharray="1,1"/><line x1="44" y1="249.5" x2="52" y2="249.5" stroke="#222" stroke-width="1" stroke-dasharray="1,1"/><line x1="44" y1="268.5" x2="53" y2="268.5" stroke="#222" stroke-width="1" stroke-dasharray="1,1"/><line x1="25.5" y1="296" x2="25.5" y2="336" stroke="#222" stroke-width="1" stroke-dasharray="1,1"/><line x1="43.5" y1="297" x2="43.5" y2="326" stroke="#222" stroke-width="1" stroke-dasharray="1,1"/><line x1="44" y1="306.5" x2="52" y2="306.5" stroke="#222" stroke-width="1" stroke-dasharray="1,1"/><line x1="44" y1="325.5" x2="53" y2="325.5" stroke="#222" stroke-width="1" stroke-dasharray="1,1"/><line x1="43.5" y1="354" x2="43.5" y2="383" stroke="#222" stroke-width="1" stroke-dasharray="1,1"/><line x1="44" y1="363.5" x2="52" y2="363.5" stroke="#222" stroke-width="1" stroke-dasharray="1,1"/><line x1="44" y1="382.5" x2="53" y2="382.5" stroke="#222" stroke-width="1" stroke-dasharray="1,1"/></svg>
<div class="a" style="left:281px;top:628px;width:2px;height:2px;background:#5f82b4"></div>
<div class="a" style="left:281px;top:632px;width:2px;height:2px;background:#5f82b4"></div>
<div class="a" style="left:281px;top:636px;width:2px;height:2px;background:#5f82b4"></div>
<div class="a" style="left:281px;top:640px;width:2px;height:2px;background:#5f82b4"></div>
<div class="a" style="left:287px;top:158px;width:1521px;height:964px;border:1px solid #809cc1;border-radius:2px;background:#cddcec"></div>
<div class="a" style="left:288px;top:159px;width:1519px;height:19px;background:linear-gradient(#d5e5f7 0%,#cbdff4 50%,#bfd6ef 100%);border-bottom:1px solid #a9c1de"></div>
<div class="t " style="left:299px;top:162px;">Dati Impianto</div>
<div class="a" style="left:292px;top:202px;width:1513px;height:917px;border:1px solid #809cc1;background:#fffffb"></div>
<div class="a" style="left:295px;top:180px;width:57px;height:23px;border:1px solid #809cc1;border-bottom:none;background:#fffffb;border-radius:1px 1px 0 0"></div>
<div class="t " style="left:304px;top:186px;letter-spacing:-0.7px">Schema</div>
<div class="a" style="left:1786px;top:146px;width:24px;height:24px;border:1px solid #aabbd6;border-radius:3px;background:linear-gradient(#e2ecf8,#d3e1f1)"></div>
<svg style="left:0;top:0" width="1820" height="1135"><rect x="1790.5" y="151.5" width="15" height="4" rx="1" fill="#c6e2f7" stroke="#27509c" stroke-width="1"/><path d="M1790.5,157.2 v7.8 M1805.5,157.2 v7.8 M1792,162.4 h12" stroke="#1c1c1c" stroke-width="1"/><path d="M1791.2,162.4 l3,-2.2 v4.4 z M1804.8,162.4 l-3,-2.2 v4.4 z" fill="#1c1c1c"/></svg>
<div class="t " style="left:307px;top:218px;color:#000;letter-spacing:-0.45px">Per proseguire occorre progettare l'impianto selezionando una delle seguenti funzionalità</div>
<div class="a" style="left:307px;top:234px;width:152px;height:36px;border:1px solid #a4b9d5;border-radius:3px;background:linear-gradient(#dee9f6 0%,#d3e2f2 50%,#c9dbee 100%)"></div>
<div class="a" style="left:307px;top:303px;width:152px;height:36px;border:1px solid #a4b9d5;border-radius:3px;background:linear-gradient(#dee9f6 0%,#d3e2f2 50%,#c9dbee 100%);box-shadow:inset 0 0 0 1px #fbfdff"></div>
<div class="t " style="left:346px;top:246px;">Progettazione manuale</div>
<div class="t " style="left:349px;top:315px;">Progettazione guidata</div>
<div class="t " style="left:463px;top:235px;color:#000;letter-spacing:-0.43px">Selezionato lo schema dell'impianto, sarà necessario specificare manualmente</div>
<div class="t " style="left:463px;top:248px;color:#000;letter-spacing:-0.43px">tutte le caratteristiche dei componenti dell'impianto.</div>
<div class="t " style="left:463px;top:261px;color:#000;letter-spacing:-0.43px">Tale funzionalità è utile nel caso in cui il progettista conosce già tutti i</div>
<div class="t " style="left:463px;top:274px;color:#000;letter-spacing:-0.43px">componenti da utilizzare all'interno del progetto, che ad ogni modo</div>
<div class="t " style="left:463px;top:287px;color:#000;letter-spacing:-0.43px">può prelevare dall'archivio del software.</div>
<div class="t " style="left:463px;top:304px;color:#000;letter-spacing:-0.43px">Attraverso una procedura guidata, saranno progettati e dimensionati tutti</div>
<div class="t " style="left:463px;top:317px;color:#000;letter-spacing:-0.43px">i componenti dell'impianto solare secondo opportuni obiettivi definiti</div>
<div class="t " style="left:463px;top:330px;color:#000;letter-spacing:-0.43px">dall'utente (massima producibilità, ecc.).</div>
<svg style="left:0;top:0" width="1820" height="1135"><path d="M314.5,238 h25 a1.5,1.5 0 0 1 1.5,1.5 v19.6 a1.5,1.5 0 0 1 -1.5,1.5 h-11.3 l-8,6.8 v-6.8 h-5.7 a1.5,1.5 0 0 1 -1.5,-1.5 v-19.6 a1.5,1.5 0 0 1 1.5,-1.5 z" fill="#087bd0"/><path d="M316,248.5 C321,240 333,240 338,248.5 C333,257 321,257 316,248.5 z" fill="none" stroke="#e8f2fb" stroke-width="1.6" stroke-linejoin="round"/><circle cx="327" cy="248.5" r="3" fill="#e8f2fb"/><path d="M314.6,333.4 L326.6,321.4" stroke="#087bd0" stroke-width="4.4" stroke-linecap="round"/><path d="M326.2,321.8 L332,316.2" stroke="#087bd0" stroke-width="4.4" stroke-linecap="round"/><path d="M327.6,320.4 L331.6,316.6" stroke="#e3eef9" stroke-width="1.9" stroke-linecap="round"/><path d="M332.4,305.6 v3.8 M325.2,308.3 l2.5,3.1 M339.5,308.5 l-2.7,2.9 M338.6,315.5 h3.9 M336.8,320.5 l2.8,2.1" stroke="#1a8ad6" stroke-width="1.3" stroke-linecap="round"/></svg>
<div class="a" style="left:541px;top:350px;width:834px;height:647px;border:1px solid #7d8fa8;border-top-color:#848f9d;background:#bdd2ea;box-shadow:inset 0 0 0 1px #cfe0f4"></div>
<div class="a" style="left:548px;top:379px;width:820px;height:611px;border:1px solid #7595c0;background:#cddcec"></div>
<div class="a" style="left:549px;top:380px;width:818px;height:65px;background:#fffffb"></div>
<div class="a" style="left:549px;top:445px;width:818px;height:1px;background:repeating-linear-gradient(90deg,#aab9cc 0 3px,transparent 3px 5px)"></div>
<svg style="left:0;top:0" width="1820" height="1135"><clipPath id="ci551"><rect x="551" y="359" width="16" height="16"/></clipPath><rect x="551" y="359" width="16" height="16" fill="#fffffd"/><g clip-path="url(#ci551)"><line x1="553.9" y1="368.3" x2="551.3" y2="368.2" stroke="#1a84d6" stroke-width="1.5"/><line x1="554.3" y1="366.2" x2="551.8" y2="365.3" stroke="#1a84d6" stroke-width="1.5"/><line x1="555.4" y1="364.2" x2="553.3" y2="362.6" stroke="#1a84d6" stroke-width="1.5"/><line x1="557.0" y1="362.6" x2="555.6" y2="360.4" stroke="#1a84d6" stroke-width="1.5"/><line x1="559.0" y1="361.7" x2="558.3" y2="359.2" stroke="#1a84d6" stroke-width="1.5"/><line x1="561.0" y1="361.5" x2="561.1" y2="358.9" stroke="#1a84d6" stroke-width="1.5"/><path d="M557.7,376 V370.7 a1.15,1.5 0 0 1 2.3,0 V376" fill="#b4daf4" stroke="#2f92dc" stroke-width="0.8"/><path d="M560.7,376 V370.7 a1.2,1.5 0 0 1 2.4,0 V376" fill="#8cc6ee" stroke="#2f92dc" stroke-width="0.8"/><path d="M564.1,376 V370.7 a1.2,1.5 0 0 1 2.4,0 V376" fill="none" stroke="#1577cc" stroke-width="0.9"/><path d="M551.9,373.3 L562.6,363.9 Q564.6,364.4 564.5,366.6" fill="none" stroke="#0a6fc4" stroke-width="2.5" stroke-linejoin="round"/><path d="M552.8,373.2 L553.6,375" stroke="#0a6fc4" stroke-width="1.4"/></g></svg>
<div class="t " style="left:571px;top:362px;letter-spacing:-0.54px">Blumatica impianti Solari - Simulazione Guidata</div>
<svg style="left:0;top:0" width="1820" height="1135"><rect x="1285.5" y="367.4" width="10" height="4" rx="1.2" fill="#fff" stroke="#45474f" stroke-width="1.2"/><rect x="1317.5" y="363.5" width="10" height="8" rx="1.2" fill="#fff" stroke="#45474f" stroke-width="1.2"/><rect x="1320.3" y="366.0" width="4.4" height="2.8" fill="#fff" stroke="#45474f" stroke-width="1.1"/><path d="M1348.6,364.1 L1349.3,363.5 L1351.6,363.5 L1353.5,365.6 L1355.4,363.5 L1357.7,363.5 L1358.4,364.1 L1355.6,367.5 L1358.4,370.9 L1357.7,371.5 L1355.4,371.5 L1353.5,369.4 L1351.6,371.5 L1349.3,371.5 L1348.6,370.9 L1351.4,367.5 z" fill="#fbfdff" stroke="#45474f" stroke-width="1.2" stroke-linejoin="round"/></svg>
<div class="t " style="left:566px;top:397px;font-weight:bold;color:#000;letter-spacing:-0.12px">Irradiazioni</div>
<div class="t " style="left:597px;top:413px;color:#000">Sezione di calcolo di tutte le irradiazioni possibili</div>
<div class="a" style="left:568px;top:468px;width:13px;height:13px;border:1px solid #a3bbd9;background:linear-gradient(135deg,#dde8f5,#f4f8fc)"></div>
<svg style="left:0;top:0" width="1820" height="1135"><path d="M570.6,473.2 l2.7,4 l4.7,-7.6" fill="none" stroke="#2f4d84" stroke-width="2.1"/></svg>
<div class="t " style="left:585px;top:469px;letter-spacing:-0.75px">Complanare</div>
<div class="a" style="left:567px;top:488px;width:389px;height:389px;border:1px solid #809cc1;background:#fffffb"></div>
<div class="a" style="left:568px;top:489px;width:387px;height:20px;background:linear-gradient(#eef4fb 0%,#e3edf9 50%,#d6e4f5 100%);border-bottom:1px solid #809cc1;box-shadow:inset 0 1px 0 rgba(255,255,255,0.85)"></div>
<div class="t c" style="left:567px;top:492px;width:79px;">Azimut γ [°]</div>
<div class="a" style="left:646px;top:489px;width:1px;height:20px;background:#809cc1"></div>
<div class="t c" style="left:646px;top:492px;width:77px;">Tilt β [°]</div>
<div class="a" style="left:723px;top:489px;width:1px;height:20px;background:#809cc1"></div>
<div class="t c" style="left:723px;top:492px;width:88px;">Rendimento [%]</div>
<div class="a" style="left:811px;top:489px;width:1px;height:20px;background:#809cc1"></div>
<div class="t c" style="left:811px;top:492px;width:127px;">Irr. Annua [kWh/m²]</div>
<div class="a" style="left:938px;top:489px;width:1px;height:20px;background:#809cc1"></div>
<div class="a" style="left:568px;top:509px;width:79px;height:19px;background:#fffffb;border-right:1px solid #b9d0ef;border-bottom:1px solid #b9d0ef;overflow:hidden"><div class="t r" style="right:3px;top:3px;color:#000">0</div></div><div class="a" style="left:647px;top:509px;width:77px;height:19px;background:#dfeaf7;border-right:1px solid #b9d0ef;border-bottom:1px solid #b9d0ef;overflow:hidden"><div class="t r" style="right:3px;top:3px;color:#000">31</div></div><div class="a" style="left:724px;top:509px;width:88px;height:19px;background:#dfeaf7;border-right:1px solid #b9d0ef;border-bottom:1px solid #b9d0ef;overflow:hidden"><div class="t r" style="right:3px;top:3px;color:#000">100,00</div></div><div class="a" style="left:812px;top:509px;width:127px;height:19px;background:#dfeaf7;border-right:1px solid #b9d0ef;border-bottom:1px solid #b9d0ef;overflow:hidden"><div class="t r" style="right:3px;top:3px;color:#000">1.760,35</div></div><div class="a" style="left:568px;top:528px;width:79px;height:19px;background:#fffffb;border-right:1px solid #b9d0ef;border-bottom:1px solid #b9d0ef;overflow:hidden"><div class="t r" style="right:3px;top:3px;color:#000">0</div></div><div class="a" style="left:647px;top:528px;width:77px;height:19px;background:#fffffb;border-right:1px solid #b9d0ef;border-bottom:1px solid #b9d0ef;overflow:hidden"><div class="t r" style="right:3px;top:3px;color:#000">32</div></div><div class="a" style="left:724px;top:528px;width:88px;height:19px;background:#fffffb;border-right:1px solid #b9d0ef;border-bottom:1px solid #b9d0ef;overflow:hidden"><div class="t r" style="right:3px;top:3px;color:#000">99,99</div></div><div class="a" style="left:812px;top:528px;width:127px;height:19px;background:#fffffb;border-right:1px solid #b9d0ef;border-bottom:1px solid #b9d0ef;overflow:hidden"><div class="t r" style="right:3px;top:3px;color:#000">1.760,24</div></div><div class="a" style="left:568px;top:547px;width:79px;height:19px;background:#fffffb;border-right:1px solid #b9d0ef;border-bottom:1px solid #b9d0ef;overflow:hidden"><div class="t r" style="right:3px;top:3px;color:#000">0</div></div><div class="a" style="left:647px;top:547px;width:77px;height:19px;background:#fffffb;border-right:1px solid #b9d0ef;border-bottom:1px solid #b9d0ef;overflow:hidden"><div class="t r" style="right:3px;top:3px;color:#000">33</div></div><div class="a" style="left:724px;top:547px;width:88px;height:19px;background:#fffffb;border-right:1px solid #b9d0ef;border-bottom:1px solid #b9d0ef;overflow:hidden"><div class="t r" style="right:3px;top:3px;color:#000">99,97</div></div><div class="a" style="left:812px;top:547px;width:127px;height:19px;background:#fffffb;border-right:1px solid #b9d0ef;border-bottom:1px solid #b9d0ef;overflow:hidden"><div class="t r" style="right:3px;top:3px;color:#000">1.759,75</div></div><div class="a" style="left:568px;top:566px;width:79px;height:19px;background:#fffffb;border-right:1px solid #b9d0ef;border-bottom:1px solid #b9d0ef;overflow:hidden"><div class="t r" style="right:3px;top:3px;color:#000">0</div></div><div class="a" style="left:647px;top:566px;width:77px;height:19px;background:#fffffb;border-right:1px solid #b9d0ef;border-bottom:1px solid #b9d0ef;overflow:hidden"><div class="t r" style="right:3px;top:3px;color:#000">34</div></div><div class="a" style="left:724px;top:566px;width:88px;height:19px;background:#fffffb;border-right:1px solid #b9d0ef;border-bottom:1px solid #b9d0ef;overflow:hidden"><div class="t r" style="right:3px;top:3px;color:#000">99,92</div></div><div class="a" style="left:812px;top:566px;width:127px;height:19px;background:#fffffb;border-right:1px solid #b9d0ef;border-bottom:1px solid #b9d0ef;overflow:hidden"><div class="t r" style="right:3px;top:3px;color:#000">1.758,89</div></div><div class="a" style="left:568px;top:585px;width:79px;height:19px;background:#fffffb;border-right:1px solid #b9d0ef;border-bottom:1px solid #b9d0ef;overflow:hidden"><div class="t r" style="right:3px;top:3px;color:#000">0</div></div><div class="a" style="left:647px;top:585px;width:77px;height:19px;background:#fffffb;border-right:1px solid #b9d0ef;border-bottom:1px solid #b9d0ef;overflow:hidden"><div class="t r" style="right:3px;top:3px;color:#000">35</div></div><div class="a" style="left:724px;top:585px;width:88px;height:19px;background:#fffffb;border-right:1px solid #b9d0ef;border-bottom:1px solid #b9d0ef;overflow:hidden"><div class="t r" style="right:3px;top:3px;color:#000">99,85</div></div><div class="a" style="left:812px;top:585px;width:127px;height:19px;background:#fffffb;border-right:1px solid #b9d0ef;border-bottom:1px solid #b9d0ef;overflow:hidden"><div class="t r" style="right:3px;top:3px;color:#000">1.757,65</div></div><div class="a" style="left:568px;top:604px;width:79px;height:19px;background:#fffffb;border-right:1px solid #b9d0ef;border-bottom:1px solid #b9d0ef;overflow:hidden"><div class="t r" style="right:3px;top:3px;color:#000">0</div></div><div class="a" style="left:647px;top:604px;width:77px;height:19px;background:#fffffb;border-right:1px solid #b9d0ef;border-bottom:1px solid #b9d0ef;overflow:hidden"><div class="t r" style="right:3px;top:3px;color:#000">36</div></div><div class="a" style="left:724px;top:604px;width:88px;height:19px;background:#fffffb;border-right:1px solid #b9d0ef;border-bottom:1px solid #b9d0ef;overflow:hidden"><div class="t r" style="right:3px;top:3px;color:#000">99,75</div></div><div class="a" style="left:812px;top:604px;width:127px;height:19px;background:#fffffb;border-right:1px solid #b9d0ef;border-bottom:1px solid #b9d0ef;overflow:hidden"><div class="t r" style="right:3px;top:3px;color:#000">1.756,04</div></div><div class="a" style="left:568px;top:623px;width:79px;height:19px;background:#fffffb;border-right:1px solid #b9d0ef;border-bottom:1px solid #b9d0ef;overflow:hidden"><div class="t r" style="right:3px;top:3px;color:#000">0</div></div><div class="a" style="left:647px;top:623px;width:77px;height:19px;background:#fffffb;border-right:1px solid #b9d0ef;border-bottom:1px solid #b9d0ef;overflow:hidden"><div class="t r" style="right:3px;top:3px;color:#000">37</div></div><div class="a" style="left:724px;top:623px;width:88px;height:19px;background:#fffffb;border-right:1px solid #b9d0ef;border-bottom:1px solid #b9d0ef;overflow:hidden"><div class="t r" style="right:3px;top:3px;color:#000">99,64</div></div><div class="a" style="left:812px;top:623px;width:127px;height:19px;background:#fffffb;border-right:1px solid #b9d0ef;border-bottom:1px solid #b9d0ef;overflow:hidden"><div class="t r" style="right:3px;top:3px;color:#000">1.754,04</div></div><div class="a" style="left:568px;top:642px;width:79px;height:19px;background:#fffffb;border-right:1px solid #b9d0ef;border-bottom:1px solid #b9d0ef;overflow:hidden"><div class="t r" style="right:3px;top:3px;color:#000">0</div></div><div class="a" style="left:647px;top:642px;width:77px;height:19px;background:#fffffb;border-right:1px solid #b9d0ef;border-bottom:1px solid #b9d0ef;overflow:hidden"><div class="t r" style="right:3px;top:3px;color:#000">38</div></div><div class="a" style="left:724px;top:642px;width:88px;height:19px;background:#fffffb;border-right:1px solid #b9d0ef;border-bottom:1px solid #b9d0ef;overflow:hidden"><div class="t r" style="right:3px;top:3px;color:#000">99,51</div></div><div class="a" style="left:812px;top:642px;width:127px;height:19px;background:#fffffb;border-right:1px solid #b9d0ef;border-bottom:1px solid #b9d0ef;overflow:hidden"><div class="t r" style="right:3px;top:3px;color:#000">1.751,68</div></div><div class="a" style="left:568px;top:661px;width:79px;height:19px;background:#fffffb;border-right:1px solid #b9d0ef;border-bottom:1px solid #b9d0ef;overflow:hidden"><div class="t r" style="right:3px;top:3px;color:#000">0</div></div><div class="a" style="left:647px;top:661px;width:77px;height:19px;background:#fffffb;border-right:1px solid #b9d0ef;border-bottom:1px solid #b9d0ef;overflow:hidden"><div class="t r" style="right:3px;top:3px;color:#000">39</div></div><div class="a" style="left:724px;top:661px;width:88px;height:19px;background:#fffffb;border-right:1px solid #b9d0ef;border-bottom:1px solid #b9d0ef;overflow:hidden"><div class="t r" style="right:3px;top:3px;color:#000">99,35</div></div><div class="a" style="left:812px;top:661px;width:127px;height:19px;background:#fffffb;border-right:1px solid #b9d0ef;border-bottom:1px solid #b9d0ef;overflow:hidden"><div class="t r" style="right:3px;top:3px;color:#000">1.748,94</div></div><div class="a" style="left:568px;top:680px;width:79px;height:19px;background:#fffffb;border-right:1px solid #b9d0ef;border-bottom:1px solid #b9d0ef;overflow:hidden"><div class="t r" style="right:3px;top:3px;color:#000">0</div></div><div class="a" style="left:647px;top:680px;width:77px;height:19px;background:#fffffb;border-right:1px solid #b9d0ef;border-bottom:1px solid #b9d0ef;overflow:hidden"><div class="t r" style="right:3px;top:3px;color:#000">40</div></div><div class="a" style="left:724px;top:680px;width:88px;height:19px;background:#fffffb;border-right:1px solid #b9d0ef;border-bottom:1px solid #b9d0ef;overflow:hidden"><div class="t r" style="right:3px;top:3px;color:#000">99,17</div></div><div class="a" style="left:812px;top:680px;width:127px;height:19px;background:#fffffb;border-right:1px solid #b9d0ef;border-bottom:1px solid #b9d0ef;overflow:hidden"><div class="t r" style="right:3px;top:3px;color:#000">1.745,82</div></div><div class="a" style="left:568px;top:699px;width:79px;height:19px;background:#fffffb;border-right:1px solid #b9d0ef;border-bottom:1px solid #b9d0ef;overflow:hidden"><div class="t r" style="right:3px;top:3px;color:#000">0</div></div><div class="a" style="left:647px;top:699px;width:77px;height:19px;background:#fffffb;border-right:1px solid #b9d0ef;border-bottom:1px solid #b9d0ef;overflow:hidden"><div class="t r" style="right:3px;top:3px;color:#000">41</div></div><div class="a" style="left:724px;top:699px;width:88px;height:19px;background:#fffffb;border-right:1px solid #b9d0ef;border-bottom:1px solid #b9d0ef;overflow:hidden"><div class="t r" style="right:3px;top:3px;color:#000">98,98</div></div><div class="a" style="left:812px;top:699px;width:127px;height:19px;background:#fffffb;border-right:1px solid #b9d0ef;border-bottom:1px solid #b9d0ef;overflow:hidden"><div class="t r" style="right:3px;top:3px;color:#000">1.742,33</div></div><div class="a" style="left:568px;top:718px;width:79px;height:19px;background:#fffffb;border-right:1px solid #b9d0ef;border-bottom:1px solid #b9d0ef;overflow:hidden"><div class="t r" style="right:3px;top:3px;color:#000">0</div></div><div class="a" style="left:647px;top:718px;width:77px;height:19px;background:#fffffb;border-right:1px solid #b9d0ef;border-bottom:1px solid #b9d0ef;overflow:hidden"><div class="t r" style="right:3px;top:3px;color:#000">42</div></div><div class="a" style="left:724px;top:718px;width:88px;height:19px;background:#fffffb;border-right:1px solid #b9d0ef;border-bottom:1px solid #b9d0ef;overflow:hidden"><div class="t r" style="right:3px;top:3px;color:#000">98,76</div></div><div class="a" style="left:812px;top:718px;width:127px;height:19px;background:#fffffb;border-right:1px solid #b9d0ef;border-bottom:1px solid #b9d0ef;overflow:hidden"><div class="t r" style="right:3px;top:3px;color:#000">1.738,47</div></div><div class="a" style="left:568px;top:737px;width:79px;height:19px;background:#fffffb;border-right:1px solid #b9d0ef;border-bottom:1px solid #b9d0ef;overflow:hidden"><div class="t r" style="right:3px;top:3px;color:#000">0</div></div><div class="a" style="left:647px;top:737px;width:77px;height:19px;background:#fffffb;border-right:1px solid #b9d0ef;border-bottom:1px solid #b9d0ef;overflow:hidden"><div class="t r" style="right:3px;top:3px;color:#000">43</div></div><div class="a" style="left:724px;top:737px;width:88px;height:19px;background:#fffffb;border-right:1px solid #b9d0ef;border-bottom:1px solid #b9d0ef;overflow:hidden"><div class="t r" style="right:3px;top:3px;color:#000">98,52</div></div><div class="a" style="left:812px;top:737px;width:127px;height:19px;background:#fffffb;border-right:1px solid #b9d0ef;border-bottom:1px solid #b9d0ef;overflow:hidden"><div class="t r" style="right:3px;top:3px;color:#000">1.734,24</div></div><div class="a" style="left:568px;top:756px;width:79px;height:19px;background:#fffffb;border-right:1px solid #b9d0ef;border-bottom:1px solid #b9d0ef;overflow:hidden"><div class="t r" style="right:3px;top:3px;color:#000">0</div></div><div class="a" style="left:647px;top:756px;width:77px;height:19px;background:#fffffb;border-right:1px solid #b9d0ef;border-bottom:1px solid #b9d0ef;overflow:hidden"><div class="t r" style="right:3px;top:3px;color:#000">44</div></div><div class="a" style="left:724px;top:756px;width:88px;height:19px;background:#fffffb;border-right:1px solid #b9d0ef;border-bottom:1px solid #b9d0ef;overflow:hidden"><div class="t r" style="right:3px;top:3px;color:#000">98,26</div></div><div class="a" style="left:812px;top:756px;width:127px;height:19px;background:#fffffb;border-right:1px solid #b9d0ef;border-bottom:1px solid #b9d0ef;overflow:hidden"><div class="t r" style="right:3px;top:3px;color:#000">1.729,64</div></div><div class="a" style="left:568px;top:775px;width:79px;height:19px;background:#fffffb;border-right:1px solid #b9d0ef;border-bottom:1px solid #b9d0ef;overflow:hidden"><div class="t r" style="right:3px;top:3px;color:#000">0</div></div><div class="a" style="left:647px;top:775px;width:77px;height:19px;background:#fffffb;border-right:1px solid #b9d0ef;border-bottom:1px solid #b9d0ef;overflow:hidden"><div class="t r" style="right:3px;top:3px;color:#000">45</div></div><div class="a" style="left:724px;top:775px;width:88px;height:19px;background:#fffffb;border-right:1px solid #b9d0ef;border-bottom:1px solid #b9d0ef;overflow:hidden"><div class="t r" style="right:3px;top:3px;color:#000">97,97</div></div><div class="a" style="left:812px;top:775px;width:127px;height:19px;background:#fffffb;border-right:1px solid #b9d0ef;border-bottom:1px solid #b9d0ef;overflow:hidden"><div class="t r" style="right:3px;top:3px;color:#000">1.724,67</div></div><div class="a" style="left:568px;top:794px;width:79px;height:19px;background:#fffffb;border-right:1px solid #b9d0ef;border-bottom:1px solid #b9d0ef;overflow:hidden"><div class="t r" style="right:3px;top:3px;color:#000">0</div></div><div class="a" style="left:647px;top:794px;width:77px;height:19px;background:#fffffb;border-right:1px solid #b9d0ef;border-bottom:1px solid #b9d0ef;overflow:hidden"><div class="t r" style="right:3px;top:3px;color:#000">46</div></div><div class="a" style="left:724px;top:794px;width:88px;height:19px;background:#fffffb;border-right:1px solid #b9d0ef;border-bottom:1px solid #b9d0ef;overflow:hidden"><div class="t r" style="right:3px;top:3px;color:#000">97,67</div></div><div class="a" style="left:812px;top:794px;width:127px;height:19px;background:#fffffb;border-right:1px solid #b9d0ef;border-bottom:1px solid #b9d0ef;overflow:hidden"><div class="t r" style="right:3px;top:3px;color:#000">1.719,34</div></div><div class="a" style="left:568px;top:813px;width:79px;height:19px;background:#fffffb;border-right:1px solid #b9d0ef;border-bottom:1px solid #b9d0ef;overflow:hidden"><div class="t r" style="right:3px;top:3px;color:#000">0</div></div><div class="a" style="left:647px;top:813px;width:77px;height:19px;background:#fffffb;border-right:1px solid #b9d0ef;border-bottom:1px solid #b9d0ef;overflow:hidden"><div class="t r" style="right:3px;top:3px;color:#000">47</div></div><div class="a" style="left:724px;top:813px;width:88px;height:19px;background:#fffffb;border-right:1px solid #b9d0ef;border-bottom:1px solid #b9d0ef;overflow:hidden"><div class="t r" style="right:3px;top:3px;color:#000">97,35</div></div><div class="a" style="left:812px;top:813px;width:127px;height:19px;background:#fffffb;border-right:1px solid #b9d0ef;border-bottom:1px solid #b9d0ef;overflow:hidden"><div class="t r" style="right:3px;top:3px;color:#000">1.713,64</div></div><div class="a" style="left:568px;top:832px;width:79px;height:19px;background:#fffffb;border-right:1px solid #b9d0ef;border-bottom:1px solid #b9d0ef;overflow:hidden"><div class="t r" style="right:3px;top:3px;color:#000">0</div></div><div class="a" style="left:647px;top:832px;width:77px;height:19px;background:#fffffb;border-right:1px solid #b9d0ef;border-bottom:1px solid #b9d0ef;overflow:hidden"><div class="t r" style="right:3px;top:3px;color:#000">48</div></div><div class="a" style="left:724px;top:832px;width:88px;height:19px;background:#fffffb;border-right:1px solid #b9d0ef;border-bottom:1px solid #b9d0ef;overflow:hidden"><div class="t r" style="right:3px;top:3px;color:#000">97,00</div></div><div class="a" style="left:812px;top:832px;width:127px;height:19px;background:#fffffb;border-right:1px solid #b9d0ef;border-bottom:1px solid #b9d0ef;overflow:hidden"><div class="t r" style="right:3px;top:3px;color:#000">1.707,58</div></div><div class="a" style="left:568px;top:851px;width:79px;height:19px;background:#fffffb;border-right:1px solid #b9d0ef;border-bottom:1px solid #b9d0ef;overflow:hidden"><div class="t r" style="right:3px;top:3px;color:#000">0</div></div><div class="a" style="left:647px;top:851px;width:77px;height:19px;background:#fffffb;border-right:1px solid #b9d0ef;border-bottom:1px solid #b9d0ef;overflow:hidden"><div class="t r" style="right:3px;top:3px;color:#000">49</div></div><div class="a" style="left:724px;top:851px;width:88px;height:19px;background:#fffffb;border-right:1px solid #b9d0ef;border-bottom:1px solid #b9d0ef;overflow:hidden"><div class="t r" style="right:3px;top:3px;color:#000">96,64</div></div><div class="a" style="left:812px;top:851px;width:127px;height:19px;background:#fffffb;border-right:1px solid #b9d0ef;border-bottom:1px solid #b9d0ef;overflow:hidden"><div class="t r" style="right:3px;top:3px;color:#000">1.701,15</div></div><div class="a" style="left:568px;top:870px;width:79px;height:6px;background:#fffffb;border-right:1px solid #b9d0ef;overflow:hidden"><div class="t r" style="right:3px;top:2px;color:#000">0</div></div><div class="a" style="left:647px;top:870px;width:77px;height:6px;background:#fffffb;border-right:1px solid #b9d0ef;overflow:hidden"><div class="t r" style="right:3px;top:2px;color:#000">50</div></div><div class="a" style="left:724px;top:870px;width:88px;height:6px;background:#fffffb;border-right:1px solid #b9d0ef;overflow:hidden"><div class="t r" style="right:3px;top:2px;color:#000">96,25</div></div><div class="a" style="left:812px;top:870px;width:127px;height:6px;background:#fffffb;border-right:1px solid #b9d0ef;overflow:hidden"><div class="t r" style="right:3px;top:2px;color:#000">1.694,37</div></div>
<div class="a" style="left:939px;top:509px;width:16px;height:367px;background:linear-gradient(90deg,#bdd0e8,#cbdcee 45%,#d6e4f3)"></div>
<svg style="left:0;top:0" width="1820" height="1135"><path d="M942,520.2 h9 l-4.5,-4.6 z" fill="#4a5878"/><path d="M942,865.4 h9 l-4.5,4.6 z" fill="#4a5878"/></svg>
<div class="a" style="left:939px;top:683px;width:15px;height:17px;border:1px solid #809cc1;border-radius:2px;background:linear-gradient(90deg,#f0f5fb,#d4e2f3)"></div>
<div class="a" style="left:943px;top:688px;width:8px;height:1px;background:#7a8fb0"></div>
<div class="a" style="left:943px;top:690px;width:8px;height:1px;background:#7a8fb0"></div>
<div class="a" style="left:943px;top:692px;width:8px;height:1px;background:#7a8fb0"></div>
<div class="a" style="left:943px;top:694px;width:8px;height:1px;background:#7a8fb0"></div>
<div class="a" style="left:960px;top:488px;width:389px;height:389px;background:#fffffb"></div>
<svg style="left:0;top:0" width="1820" height="1135"><line x1="984.7" y1="494.7" x2="984.7" y2="843.5" stroke="#eeeeea" stroke-width="1"/><line x1="1013.9" y1="494.7" x2="1013.9" y2="843.5" stroke="#eeeeea" stroke-width="1"/><line x1="1043.1" y1="494.7" x2="1043.1" y2="843.5" stroke="#eeeeea" stroke-width="1"/><line x1="1072.3" y1="494.7" x2="1072.3" y2="843.5" stroke="#eeeeea" stroke-width="1"/><line x1="1101.5" y1="494.7" x2="1101.5" y2="843.5" stroke="#eeeeea" stroke-width="1"/><line x1="1130.7" y1="494.7" x2="1130.7" y2="843.5" stroke="#eeeeea" stroke-width="1"/><line x1="1159.9" y1="494.7" x2="1159.9" y2="843.5" stroke="#eeeeea" stroke-width="1"/><line x1="1189.1" y1="494.7" x2="1189.1" y2="843.5" stroke="#eeeeea" stroke-width="1"/><line x1="1218.3" y1="494.7" x2="1218.3" y2="843.5" stroke="#eeeeea" stroke-width="1"/><line x1="1247.5" y1="494.7" x2="1247.5" y2="843.5" stroke="#eeeeea" stroke-width="1"/><line x1="1276.7" y1="494.7" x2="1276.7" y2="843.5" stroke="#eeeeea" stroke-width="1"/><line x1="1305.9" y1="494.7" x2="1305.9" y2="843.5" stroke="#eeeeea" stroke-width="1"/><line x1="1335.1" y1="494.7" x2="1335.1" y2="843.5" stroke="#eeeeea" stroke-width="1"/><line x1="981" y1="839.5" x2="1339" y2="839.5" stroke="#eeeeea" stroke-width="1"/><text transform="translate(976.6,843.6) scale(0.91,1)" text-anchor="end" font-family="Liberation Sans" font-size="10.7" fill="#a9a7a5" letter-spacing="0">60</text><line x1="981" y1="801.6" x2="1339" y2="801.6" stroke="#eeeeea" stroke-width="1"/><text transform="translate(976.6,805.7) scale(0.91,1)" text-anchor="end" font-family="Liberation Sans" font-size="10.7" fill="#a9a7a5" letter-spacing="0">80</text><line x1="981" y1="763.7" x2="1339" y2="763.7" stroke="#eeeeea" stroke-width="1"/><text transform="translate(976.6,767.8) scale(0.91,1)" text-anchor="end" font-family="Liberation Sans" font-size="10.7" fill="#a9a7a5" letter-spacing="0">100</text><line x1="981" y1="725.8" x2="1339" y2="725.8" stroke="#eeeeea" stroke-width="1"/><text transform="translate(976.6,729.9) scale(0.91,1)" text-anchor="end" font-family="Liberation Sans" font-size="10.7" fill="#a9a7a5" letter-spacing="0">120</text><line x1="981" y1="687.9" x2="1339" y2="687.9" stroke="#eeeeea" stroke-width="1"/><text transform="translate(976.6,692.0) scale(0.91,1)" text-anchor="end" font-family="Liberation Sans" font-size="10.7" fill="#a9a7a5" letter-spacing="0">140</text><line x1="981" y1="650.1" x2="1339" y2="650.1" stroke="#eeeeea" stroke-width="1"/><text transform="translate(976.6,654.2) scale(0.91,1)" text-anchor="end" font-family="Liberation Sans" font-size="10.7" fill="#a9a7a5" letter-spacing="0">160</text><line x1="981" y1="612.2" x2="1339" y2="612.2" stroke="#eeeeea" stroke-width="1"/><text transform="translate(976.6,616.3) scale(0.91,1)" text-anchor="end" font-family="Liberation Sans" font-size="10.7" fill="#a9a7a5" letter-spacing="0">180</text><line x1="981" y1="574.3" x2="1339" y2="574.3" stroke="#eeeeea" stroke-width="1"/><text transform="translate(976.6,578.4) scale(0.91,1)" text-anchor="end" font-family="Liberation Sans" font-size="10.7" fill="#a9a7a5" letter-spacing="0">200</text><line x1="981" y1="536.4" x2="1339" y2="536.4" stroke="#eeeeea" stroke-width="1"/><text transform="translate(976.6,540.5) scale(0.91,1)" text-anchor="end" font-family="Liberation Sans" font-size="10.7" fill="#a9a7a5" letter-spacing="0">220</text><line x1="981" y1="498.5" x2="1339" y2="498.5" stroke="#eeeeea" stroke-width="1"/><text transform="translate(976.6,502.6) scale(0.91,1)" text-anchor="end" font-family="Liberation Sans" font-size="10.7" fill="#a9a7a5" letter-spacing="0">240</text><path d="M984.7,786.6 C989.5,783.0 1003.9,780.9 1013.6,764.8 C1023.3,748.6 1033.2,710.2 1042.9,689.7 C1052.7,669.2 1062.3,654.0 1072.1,641.8 C1081.8,629.6 1091.7,626.2 1101.4,616.4 C1111.2,606.6 1120.8,597.2 1130.6,582.9 C1140.3,568.6 1150.2,531.6 1159.9,530.4 C1169.7,529.2 1179.3,555.9 1189.1,575.5 C1198.8,595.1 1208.7,626.9 1218.4,647.8 C1228.2,668.6 1237.8,678.1 1247.6,700.6 C1257.3,723.1 1267.2,768.8 1276.9,782.7 C1283.9,788.0 1293.8,786.4 1305.8,783.8 L1305.8,839.5 L984.7,839.5 z" fill="rgba(192,227,254,0.6)"/><path d="M984.7,786.6 C989.5,783.0 1003.9,780.9 1013.6,764.8 C1023.3,748.6 1033.2,710.2 1042.9,689.7 C1052.7,669.2 1062.3,654.0 1072.1,641.8 C1081.8,629.6 1091.7,626.2 1101.4,616.4 C1111.2,606.6 1120.8,597.2 1130.6,582.9 C1140.3,568.6 1150.2,531.6 1159.9,530.4 C1169.7,529.2 1179.3,555.9 1189.1,575.5 C1198.8,595.1 1208.7,626.9 1218.4,647.8 C1228.2,668.6 1237.8,678.1 1247.6,700.6 C1257.3,723.1 1267.2,768.8 1276.9,782.7 C1283.9,788.0 1293.8,786.4 1305.8,783.8" fill="none" stroke="#1590ee" stroke-width="2.2"/><circle cx="984.7" cy="786.6" r="3" fill="#fff" stroke="#1590ee" stroke-width="1.6"/><circle cx="1013.6" cy="764.8" r="3" fill="#fff" stroke="#1590ee" stroke-width="1.6"/><circle cx="1042.9" cy="689.7" r="3" fill="#fff" stroke="#1590ee" stroke-width="1.6"/><circle cx="1072.1" cy="641.8" r="3" fill="#fff" stroke="#1590ee" stroke-width="1.6"/><circle cx="1101.4" cy="616.4" r="3" fill="#fff" stroke="#1590ee" stroke-width="1.6"/><circle cx="1130.6" cy="582.9" r="3" fill="#fff" stroke="#1590ee" stroke-width="1.6"/><circle cx="1159.9" cy="530.4" r="3" fill="#fff" stroke="#1590ee" stroke-width="1.6"/><circle cx="1189.1" cy="575.5" r="3" fill="#fff" stroke="#1590ee" stroke-width="1.6"/><circle cx="1218.4" cy="647.8" r="3" fill="#fff" stroke="#1590ee" stroke-width="1.6"/><circle cx="1247.6" cy="700.6" r="3" fill="#fff" stroke="#1590ee" stroke-width="1.6"/><circle cx="1276.9" cy="782.7" r="3" fill="#fff" stroke="#1590ee" stroke-width="1.6"/><circle cx="1305.8" cy="783.8" r="3" fill="#fff" stroke="#1590ee" stroke-width="1.6"/><text transform="translate(984.7,858.1) scale(0.9,1)" text-anchor="middle" font-family="Liberation Sans" font-size="10.6" fill="#a9a7a5" letter-spacing="0">Gen</text><text transform="translate(1013.9,858.1) scale(0.9,1)" text-anchor="middle" font-family="Liberation Sans" font-size="10.6" fill="#a9a7a5" letter-spacing="0">Feb</text><text transform="translate(1043.1,858.1) scale(0.9,1)" text-anchor="middle" font-family="Liberation Sans" font-size="10.6" fill="#a9a7a5" letter-spacing="0">Mar</text><text transform="translate(1072.3,858.1) scale(0.9,1)" text-anchor="middle" font-family="Liberation Sans" font-size="10.6" fill="#a9a7a5" letter-spacing="0">Apr</text><text transform="translate(1101.5,858.1) scale(0.9,1)" text-anchor="middle" font-family="Liberation Sans" font-size="10.6" fill="#a9a7a5" letter-spacing="0">Mag</text><text transform="translate(1130.7,858.1) scale(0.9,1)" text-anchor="middle" font-family="Liberation Sans" font-size="10.6" fill="#a9a7a5" letter-spacing="0">Giu</text><text transform="translate(1159.9,858.1) scale(0.9,1)" text-anchor="middle" font-family="Liberation Sans" font-size="10.6" fill="#a9a7a5" letter-spacing="0">Lug</text><text transform="translate(1189.1,858.1) scale(0.9,1)" text-anchor="middle" font-family="Liberation Sans" font-size="10.6" fill="#a9a7a5" letter-spacing="0">Ago</text><text transform="translate(1218.3,858.1) scale(0.9,1)" text-anchor="middle" font-family="Liberation Sans" font-size="10.6" fill="#a9a7a5" letter-spacing="0">Set</text><text transform="translate(1247.5,858.1) scale(0.9,1)" text-anchor="middle" font-family="Liberation Sans" font-size="10.6" fill="#a9a7a5" letter-spacing="0">Ott</text><text transform="translate(1276.7,858.1) scale(0.9,1)" text-anchor="middle" font-family="Liberation Sans" font-size="10.6" fill="#a9a7a5" letter-spacing="0">Nov</text><text transform="translate(1305.9,858.1) scale(0.9,1)" text-anchor="middle" font-family="Liberation Sans" font-size="10.6" fill="#a9a7a5" letter-spacing="0">Dic</text><text transform="translate(1159.9,867.1) scale(0.9,1)" text-anchor="middle" font-family="Liberation Sans" font-size="10.6" fill="#a9a7a5" letter-spacing="0">Mesi</text></svg>
<div class="t " style="left:567px;top:885px;">Azimut γ [°]</div>
<div class="t " style="left:567px;top:909px;">Tilt β [°]</div>
<div class="a" style="left:703px;top:881px;width:74px;height:20px;border:1px solid #8ea4c2;background:#cddcec"></div>
<div class="a" style="left:760px;top:882px;width:1px;height:18px;background:#8ea4c2"></div>
<div class="t r" style="left:703px;top:885px;width:54px;color:#000">0</div>
<svg style="left:0;top:0" width="1820" height="1135"><path d="M766.4,888.4 h4.4 l-2.2,-2.4 z M766.4,893.6 h4.4 l-2.2,2.4 z" fill="#aebbd0"/></svg>
<div class="a" style="left:703px;top:905px;width:74px;height:20px;border:1px solid #8ea4c2;background:#cddcec"></div>
<div class="a" style="left:760px;top:906px;width:1px;height:18px;background:#8ea4c2"></div>
<div class="t r" style="left:703px;top:909px;width:54px;color:#000">31</div>
<svg style="left:0;top:0" width="1820" height="1135"><path d="M766.4,912.4 h4.4 l-2.2,-2.4 z M766.4,917.6 h4.4 l-2.2,2.4 z" fill="#aebbd0"/></svg>
<div class="t " style="left:781px;top:885px;letter-spacing:-0.37px">Irradiazione annua [kwh/m²]</div>
<div class="a" style="left:917px;top:881px;width:121px;height:20px;border:1px solid #8ea4c2;background:#cddcec"></div>
<div class="t " style="left:921px;top:885px;color:#000">1.760,35</div>
<div class="a" style="left:549px;top:943px;width:818px;height:1px;background:repeating-linear-gradient(90deg,#aab9cc 0 3px,transparent 3px 5px)"></div>
<div class="a" style="left:1116px;top:956px;width:75px;height:22px;border:1px solid #a4b9d5;border-radius:3px;background:linear-gradient(#e0eaf6 0%,#d4e2f2 50%,#c9dbee 100%)"></div>
<div class="t c" style="left:1116px;top:961px;width:75px;color:#000">&lt; Indietro</div>
<div class="a" style="left:1195px;top:956px;width:74px;height:22px;border:1px solid #a4b9d5;border-radius:3px;background:linear-gradient(#e0eaf6 0%,#d4e2f2 50%,#c9dbee 100%);box-shadow:inset 0 0 0 1px #fdfeff, inset 0 0 1px 1px #fdfeff"></div>
<div class="t c" style="left:1195px;top:961px;width:74px;color:#000">Avanti &gt;</div>
<div class="a" style="left:1281px;top:956px;width:75px;height:22px;border:1px solid #a4b9d5;border-radius:3px;background:linear-gradient(#e0eaf6 0%,#d4e2f2 50%,#c9dbee 100%)"></div>
<div class="t c" style="left:1281px;top:961px;width:75px;color:#000">Annulla</div>
<div class="a" style="left:1198px;top:959px;width:69px;height:16px;border:1px dotted #1a1a2a;border-radius:1px"></div>
<div class="a" style="left:1363px;top:986px;width:2px;height:2px;background:#7f95b5"></div>
<div class="a" style="left:1360px;top:986px;width:2px;height:2px;background:#7f95b5"></div>
<div class="a" style="left:1363px;top:983px;width:2px;height:2px;background:#7f95b5"></div>
<div class="a" style="left:1357px;top:986px;width:2px;height:2px;background:#7f95b5"></div>
<div class="a" style="left:1360px;top:983px;width:2px;height:2px;background:#7f95b5"></div>
<div class="a" style="left:1363px;top:980px;width:2px;height:2px;background:#7f95b5"></div>
</body></html>
